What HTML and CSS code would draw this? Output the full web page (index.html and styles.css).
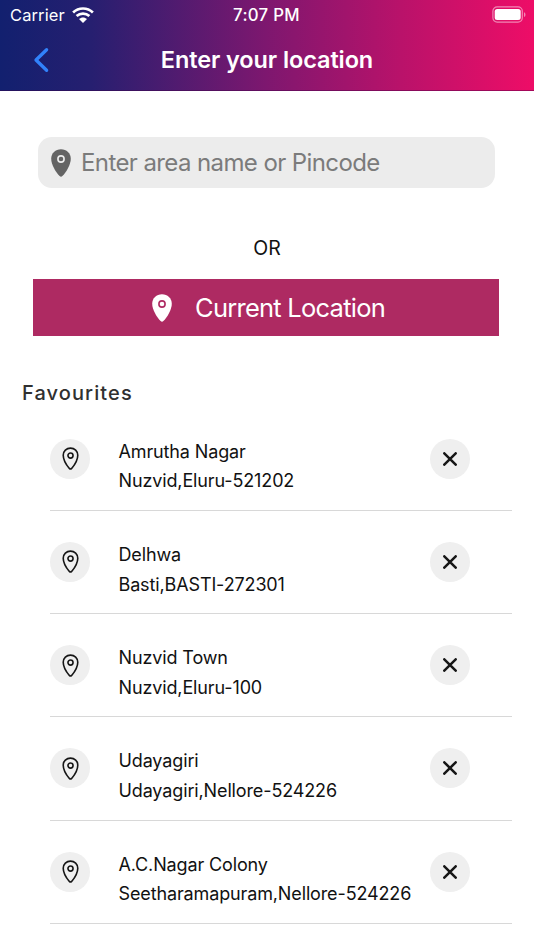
FILE: index.html
```
<!DOCTYPE html>
<html lang="en">
<head>
<meta charset="utf-8">
<title>Enter your location</title>
<link rel="stylesheet" href="styles.css">
</head>
<body>
<svg class="sprite" aria-hidden="true">
  <symbol id="pin-solid" viewBox="0 0 20 28">
    <path fill="currentColor" stroke="none" d="M10 .2C4.500 .2 .2 4.300 .2 9.700c0 5.600 4.500 13.600 8.400 17.400q1.400 1.300 2.800 0c3.900-3.800 8.400-11.800 8.400-17.400C19.800 4.300 15.500 .2 10 .2z"/>
    <circle cx="10" cy="10" r="3.100" fill="none" stroke-width="1.600"/>
  </symbol>
  <symbol id="pin-line" viewBox="0 0 18 24">
    <path d="M9 1C4.700 1 1.300 4.200 1.300 8.500c0 4.500 3.500 10.500 6.500 14q1.200 1.300 2.400 0c3-3.500 6.500-9.500 6.500-14C16.700 4.200 13.300 1 9 1z"/>
    <circle cx="9" cy="8.900" r="2.700"/>
  </symbol>
  <symbol id="cross" viewBox="0 0 14 14"><path d="M1.300 1.300l11.400 11.400M12.700 1.300L1.300 12.700"/></symbol>
</svg>
<header class="header">
  <div class="status">
    <div class="carrier"><span>Carrier</span>
      <svg class="wifi" viewBox="0 0 22 16"><g fill="none" stroke="#fff" stroke-width="2.700"><path d="M1.100 5.400C6.700 .2 15.300 .2 20.900 5.400"/><path d="M4.600 9c3.600-3.300 9.200-3.300 12.800 0"/></g><path fill="#fff" d="M7 12c2.300-2.100 5.700-2.100 8 0l-4 4z"/></svg>
    </div>
    <div class="clock">7:07 PM</div>
    <svg class="battery" viewBox="0 0 34 17"><rect x=".9" y=".9" width="29.400" height="15.200" rx="4.300" fill="none" stroke="#fff" stroke-opacity=".5" stroke-width="1.200"/><rect x="2.700" y="2.900" width="26" height="11.200" rx="2.500" fill="#fff"/><path d="M32 6.300q1.500 .4 1.500 2.400T32 11.100z" fill="#fff" fill-opacity=".5"/></svg>
  </div>
  <div class="navbar">
    <svg class="back" viewBox="0 0 16 26"><path d="M13.600 2.700L3 13l10.600 10.300"/></svg>
    <h1>Enter your location</h1>
  </div>
</header>
<main>
  <div class="search"><svg class="solid dark"><use href="#pin-solid"/></svg><span class="placeholder">Enter area name or Pincode</span></div>
  <div class="or">OR</div>
  <div class="current"><svg class="solid light"><use href="#pin-solid"/></svg><span class="current-label">Current Location</span></div>
  <h2>Favourites</h2>
  <ul class="list">
    <li><span class="round"><svg class="pin"><use href="#pin-line"/></svg></span><div class="place"><div>Amrutha Nagar</div><div>Nuzvid,Eluru-521202</div></div><span class="round"><svg class="cross"><use href="#cross"/></svg></span></li>
    <li><span class="round"><svg class="pin"><use href="#pin-line"/></svg></span><div class="place"><div>Delhwa</div><div>Basti,BASTI-272301</div></div><span class="round"><svg class="cross"><use href="#cross"/></svg></span></li>
    <li><span class="round"><svg class="pin"><use href="#pin-line"/></svg></span><div class="place"><div>Nuzvid Town</div><div>Nuzvid,Eluru-100</div></div><span class="round"><svg class="cross"><use href="#cross"/></svg></span></li>
    <li><span class="round"><svg class="pin"><use href="#pin-line"/></svg></span><div class="place"><div>Udayagiri</div><div>Udayagiri,Nellore-524226</div></div><span class="round"><svg class="cross"><use href="#cross"/></svg></span></li>
    <li><span class="round"><svg class="pin"><use href="#pin-line"/></svg></span><div class="place"><div>A.C.Nagar Colony</div><div>Seetharamapuram,Nellore-524226</div></div><span class="round"><svg class="cross"><use href="#cross"/></svg></span></li>
  </ul>
</main>
</body>
</html>
```
FILE: styles.css
```
* { box-sizing: border-box; }
body {
  margin: 0;
  height: 950px;
  overflow: hidden;
  background: #fff;
  color: #111;
  font-family: Inter, "Liberation Sans", sans-serif;
}
svg { display: block; flex: none; }
.sprite { display: none; }
h1, h2, ul { margin: 0; padding: 0; }

.header {
  height: 91px;
  color: #fff;
  background: linear-gradient(90deg, #12206f 0%, #261f70 17%, #7e176f 50%, #b9126a 75%, #ee0d67 100%);
  border-bottom: 1px solid rgba(60, 0, 70, .4);
}
.status {
  height: 30px;
  display: grid;
  grid-template-columns: 1fr auto 1fr;
  align-items: center;
  padding: 0 8px 0 10px;
  font-size: 16.500px;
}
.carrier { display: flex; align-items: center; gap: 7px; letter-spacing: .1px; }
.wifi { width: 22px; height: 16px; }
.clock { font-weight: 500; font-size: 16.800px; letter-spacing: .3px; margin-left: -3px; }
.battery { width: 34px; height: 17px; justify-self: end; margin-top: -2px; }
.navbar {
  height: 60px;
  display: grid;
  grid-template-columns: 50px 1fr 50px;
  align-items: center;
}
.back { width: 16px; height: 26px; margin-left: 33px; fill: none; stroke: #3182fb; stroke-width: 3.300; stroke-linecap: round; stroke-linejoin: round; }
h1 { text-align: center; font-size: 23.500px; font-weight: 600; line-height: 30px; letter-spacing: -.1px; }

.search {
  margin: 46px 39px 0 38px;
  height: 51px;
  border-radius: 14px;
  background: #ececec;
  display: flex;
  align-items: center;
  padding-left: 13px;
  color: #7b7b7b;
  font-size: 24px;
  letter-spacing: -.6px;
}
.solid { width: 20px; height: 28px; }
.dark { color: #646464; stroke: #ececec; }
.light { color: #fff; stroke: #ae2a62; }
.placeholder { margin-left: 10px; }
.or { margin-top: 45px; height: 30px; line-height: 30px; text-align: center; font-size: 19.500px; }
.current {
  margin: 16px 35px 0 33px;
  height: 57px;
  background: #ae2a62;
  color: #fff;
  display: flex;
  align-items: center;
  padding-left: 119px;
  font-size: 25.500px;
  letter-spacing: -.75px;
}
.current-label { margin-left: 23px; }
h2 { margin: 42px 0 0 22px; height: 30px; line-height: 31px; font-size: 20px; font-weight: 500; letter-spacing: 1.100px; color: #303030; }
.list { list-style: none; margin: -.3px 22px 0 50px; }
.list li {
  height: 103.250px;
  border-bottom: 1px solid #d8d8d8;
  padding-top: 28px;
  display: grid;
  grid-template-columns: 40px 311px 40px;
  column-gap: 28.500px;
  align-items: start;
}
.list li > :last-child { margin-left: -28.500px; }
.round { width: 40px; height: 40px; margin-top: 3px; border-radius: 50%; background: #efefef; display: grid; place-items: center; }
.round svg { fill: none; stroke: #161616; stroke-width: 1.700; }
.round .pin { width: 17px; height: 23px; }
.round .cross { width: 14px; height: 14px; stroke-width: 2.500; stroke-linecap: round; }
.place { margin-top: .8px; font-size: 18px; line-height: 29.800px; letter-spacing: -.13px; white-space: nowrap; }
```
